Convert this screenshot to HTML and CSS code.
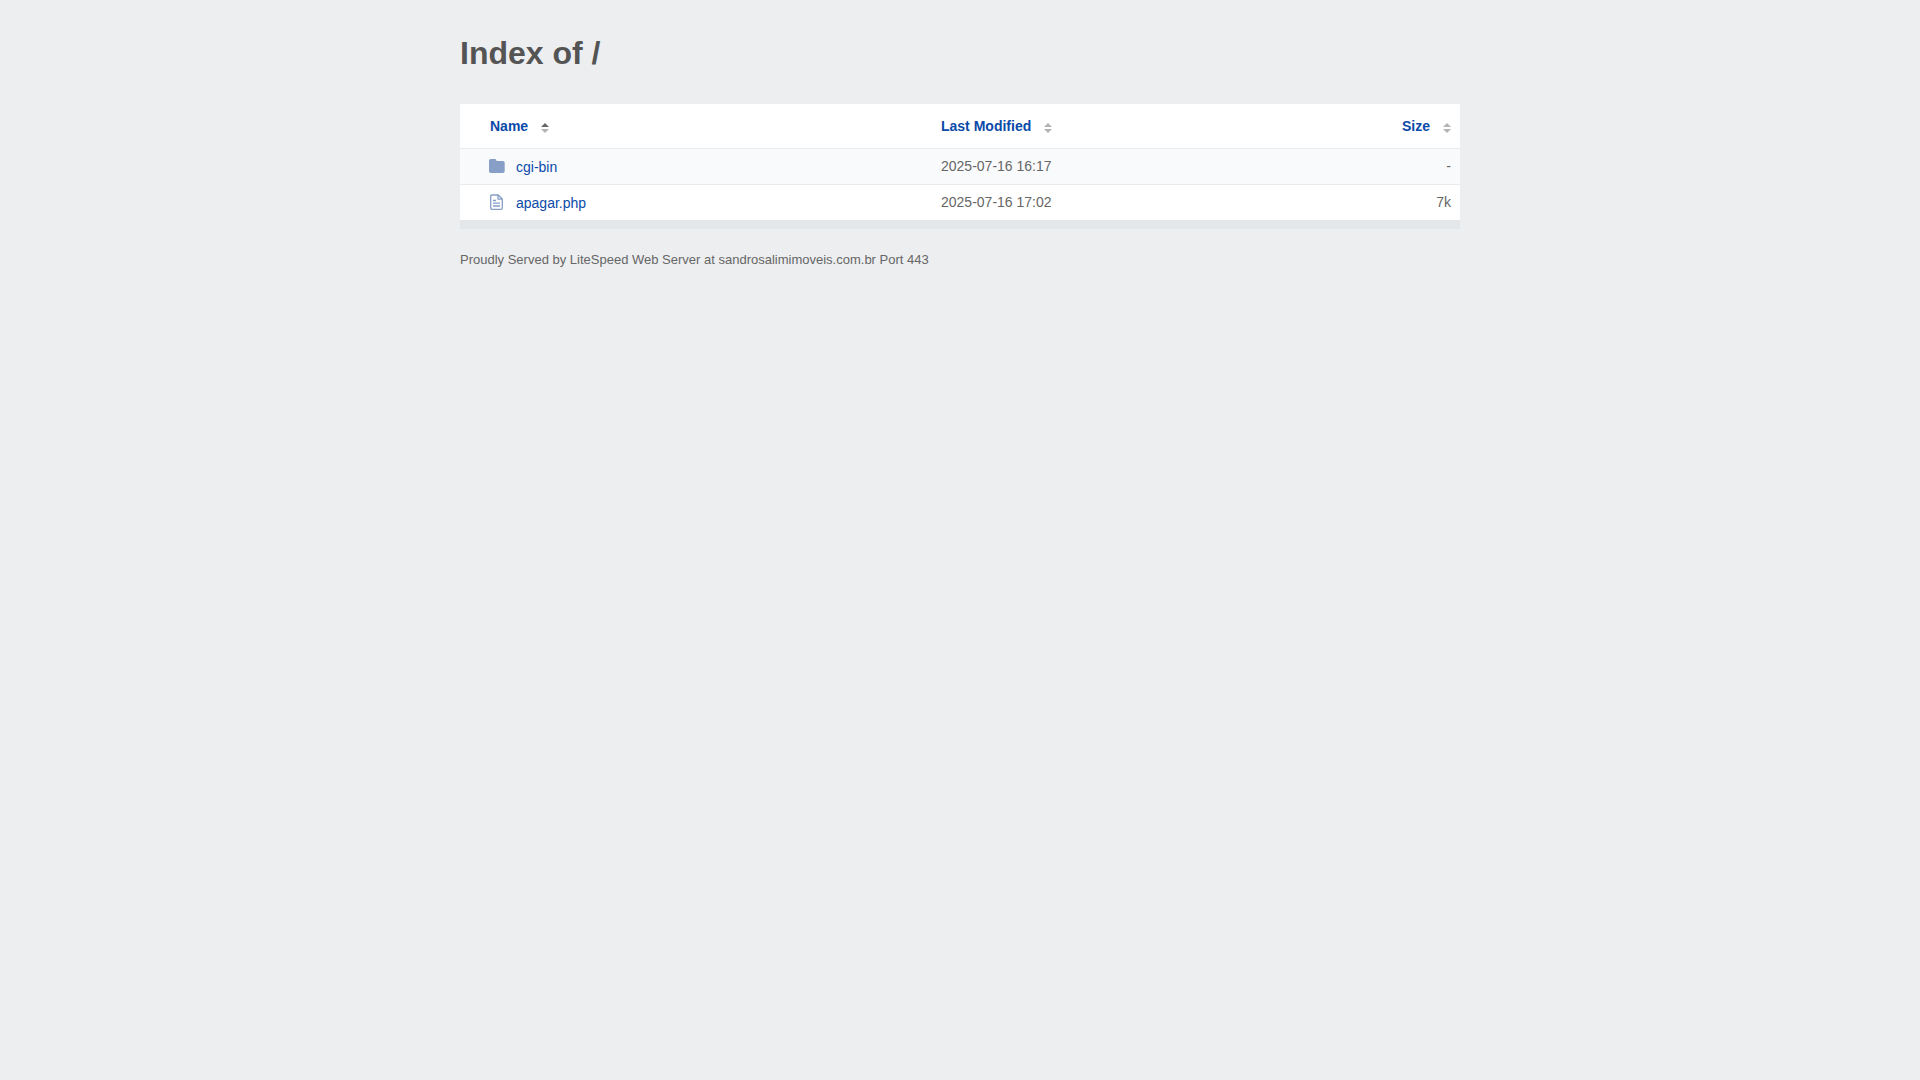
FILE: index.html
```html
<!DOCTYPE html>
<html lang="en">
<head>
    <meta charset="UTF-8">
    <meta name="viewport" content="width=device-width, initial-scale=1.0">
    <title>Index of /</title>
    <link rel="stylesheet" href="styles.css">
</head>
<body>
    <div class="content">
        <h1>Index of /</h1>
        <table class="listing">
            <thead>
                <tr>
                    <th class="name" aria-sort="ascending">
                        <button type="button">Name
                            <svg class="sort" width="8" height="10" viewBox="0 0 8 10"><path class="up" d="M4 0L8 4H0z"/><path class="down" d="M0 6H8L4 10z"/></svg>
                        </button>
                    </th>
                    <th class="modified">
                        <button type="button">Last Modified
                            <svg class="sort" width="8" height="10" viewBox="0 0 8 10"><path class="up" d="M4 0L8 4H0z"/><path class="down" d="M0 6H8L4 10z"/></svg>
                        </button>
                    </th>
                    <th class="size">
                        <button type="button">Size
                            <svg class="sort" width="8" height="10" viewBox="0 0 8 10"><path class="up" d="M4 0L8 4H0z"/><path class="down" d="M0 6H8L4 10z"/></svg>
                        </button>
                    </th>
                </tr>
            </thead>
            <tbody>
                <tr>
                    <td class="name">
                        <a href="/cgi-bin/">
                            <!-- folder -->
                            <svg class="icon" width="16" height="16" viewBox="0 0 16 16"><path fill="#879fc7" d="M1.700 1h4.300q1 0 1.300 1l.3 1H14q1.700 0 1.700 1.700V13.300q0 1.700-1.700 1.700H1.700Q0 15 0 13.300V2.700Q0 1 1.700 1z"/></svg>
                            cgi-bin
                        </a>
                    </td>
                    <td class="modified">2025-07-16 16:17</td>
                    <td class="size">-</td>
                </tr>
                <tr>
                    <td class="name">
                        <a href="/apagar.php">
                            <!-- text file -->
                            <svg class="icon" width="16" height="16" viewBox="0 0 16 16" fill="none" stroke="#879fc7" stroke-width="1.300"><path d="M3 1H9.200L13.300 5v9q0 1.300-1.300 1.300H3q-1.300 0-1.300-1.300V2.300Q1.700 1 3 1zM9 1v4.200h4.200M4 6.500h3M4 9.200h7M4 12h7"/></svg>
                            apagar.php
                        </a>
                    </td>
                    <td class="modified">2025-07-16 17:02</td>
                    <td class="size">7k</td>
                </tr>
            </tbody>
        </table>
        <footer>Proudly Served by LiteSpeed Web Server at sandrosalimimoveis.com.br Port 443</footer>
    </div>
</body>
</html>
```
FILE: styles.css
```css
body {
    margin: 0;
    background-color: #edeef0;
    color: #666;
    font-family: "Liberation Sans", Arial, sans-serif;
    font-size: 14px;
    line-height: 19px;
}
.content {
    max-width: 1000px;
    margin: 0 auto;
    padding: 32px 20px;
}
h1 {
    margin: 0 0 30px;
    color: #545454;
    font-size: 32px;
    line-height: 42px;
}
.listing {
    width: 100%;
    table-layout: fixed;
    border-collapse: separate;
    border-spacing: 0;
    background-color: #fff;
    border-bottom: 9px solid #e3e7ea;
}
.listing th,
.listing td {
    padding: 8px 9px 8px 11px;
    text-align: left;
}
.listing th {
    padding-top: 12px;
    padding-bottom: 12px;
}
.listing td {
    border-top: 1px solid #e9ebec;
}
.listing tbody tr:nth-child(odd) {
    background-color: #f9fafc;
}
.listing .name {
    width: 47%;
    box-sizing: border-box;
}
.listing th.name {
    padding-left: 30px;
}
.listing td.name {
    padding: 9px 9px 7px 29px;
}
.listing .size {
    text-align: right;
}
.listing button {
    display: inline-flex;
    align-items: center;
    gap: 13px;
    padding: 0;
    border: none;
    background: none;
    color: #0a4aa8;
    font: inherit;
    line-height: 20px;
    vertical-align: top;
    cursor: pointer;
}
.sort {
    margin-top: 3px;
    fill: #b3b3b3;
}
th[aria-sort="ascending"] .up {
    fill: #666;
}
a {
    display: flex;
    align-items: flex-start;
    gap: 11px;
    color: #0a4aa8;
    text-decoration: none;
}
a:hover {
    text-decoration: underline;
}
footer {
    margin-top: 21px;
    font-size: 13px;
}
```
